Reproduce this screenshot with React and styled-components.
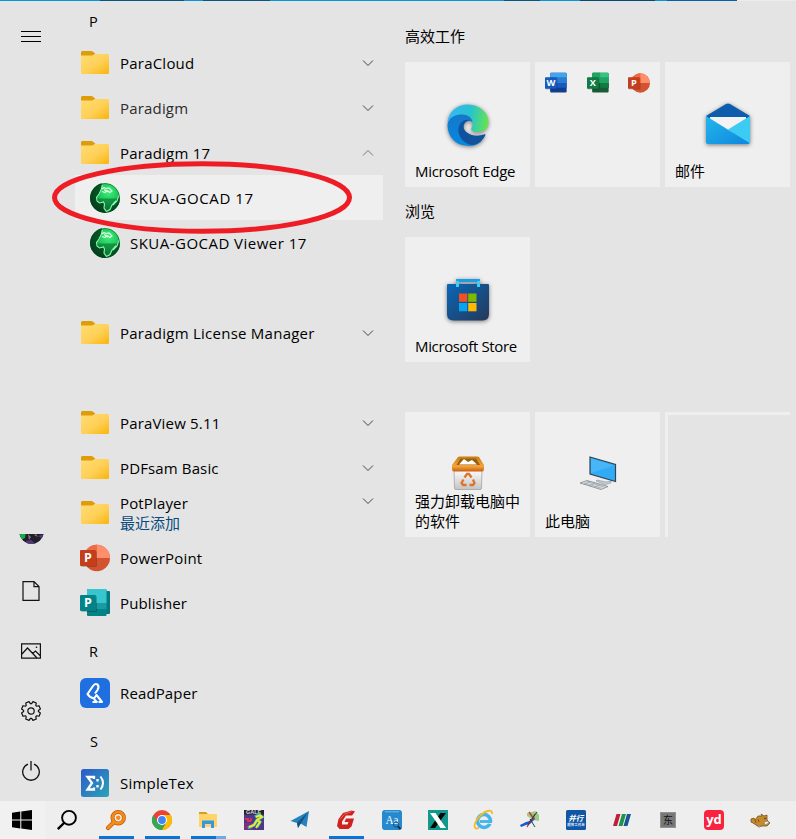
import React from 'react';
import styled, { createGlobalStyle, css } from 'styled-components';

const GlobalStyle = createGlobalStyle`
  * { box-sizing: border-box; }
  body { margin: 0; overflow: hidden; }
  svg { display: block; flex: none; overflow: visible; }
`;

const Screen = styled.div`
  position: relative;
  display: flex;
  flex-direction: column;
  width: 796px;
  height: 839px;
  overflow: hidden;
  background: #e4e4e4;
  color: #000;
  font: 15px/20px 'Open Sans', 'Noto Sans', 'Noto Sans CJK SC', sans-serif;
`;

const TopEdge = styled.div`
  flex: none;
  height: 1px;
  background: linear-gradient(90deg,
    #0896da 0 100px, #075580 100px 184px, #0896da 184px 203px, #075580 203px 270px,
    #0896da 270px 504px, #075580 504px 540px, #0896da 540px 580px, #064a72 580px 655px,
    #0896da 655px 667px, #0561a6 667px 737px, #ececec 737px);
`;

const Menu = styled.div`
  display: flex;
  height: 800px;
  overflow: hidden;
`;

const Rail = styled.nav`
  display: flex;
  flex-direction: column;
  align-items: center;
  width: 62px;
  margin-right: 13px;
`;

const RailSlot = styled.div`
  display: grid;
  place-items: center;
  width: 62px;
  height: ${p => p.$h || 60}px;
  flex: none;
`;

const RailSpacer = styled.div`flex: 1;`;

const Avatar = styled.div`
  flex: none;
  width: 25px;
  height: 10px;
  margin: 0 0 17px 1px;
  overflow: hidden;
`;

const AppList = styled.div`
  display: flex;
  flex-direction: column;
  width: 308px;
  margin-right: 22px;
`;

const Letter = styled.div`
  flex: none;
  height: ${p => p.$h || 45}px;
  padding: ${p => (p.$h ? 11 : 17)}px 0 0 ${p => p.$indent || 14}px;
  font-size: 14.5px;
`;

const AppRow = styled.div`
  display: flex;
  flex: none;
  align-items: center;
  height: 45px;
  padding: 0 9px 0 ${p => (p.$nested ? 14 : 4)}px;
  ${p => p.$hover && css`background: #efefef;`}
`;

const IconSlot = styled.div`
  display: grid;
  place-items: center;
  width: 32px;
  height: 32px;
`;

const AppName = styled.div`
  flex: 1;
  margin-left: 9px;
  padding-top: 1px;
  white-space: nowrap;
  letter-spacing: ${p => p.$ls || 0.13}px;
  color: ${p => (p.$dim ? '#2c2c2c' : 'inherit')};
`;

const Recent = styled.div`
  color: #064a80;
  letter-spacing: 0;
`;

const ChevronSlot = styled.div`
  padding-bottom: ${p => (p.$raised ? 24 : 0)}px;
`;

const Tiles = styled.div`
  display: flex;
  flex-direction: column;
  width: 385px;
`;

const GroupTitle = styled.div`
  height: ${p => p.$h}px;
  padding-top: ${p => p.$top}px;
`;

const TileRow = styled.div`
  display: flex;
  gap: 5px;
  height: 125px;
`;

const Tile = styled.div`
  display: flex;
  flex-direction: column;
  align-items: center;
  width: 125px;
  height: 125px;
  padding: ${p => p.$top || 0}px 0 6px;
  background: #efefef;
`;

const FolderTile = styled(Tile)`
  flex-direction: row;
  align-items: flex-start;
  justify-content: space-between;
  padding: 10px 10px 0 10px;
`;

const GhostTile = styled(Tile)`
  background: transparent;
  border: solid #efefef;
  border-width: 3px 0 0 3px;
`;

const TileLabel = styled.div`
  width: 100%;
  margin-top: auto;
  padding-left: 10px;
  white-space: pre;
  letter-spacing: ${p => p.$ls || 0}px;
`;

const Taskbar = styled.footer`
  display: flex;
  height: 38px;
  background: #eeeeee;
`;

const StartButton = styled.div`
  display: grid;
  place-items: center;
  width: 45px;
  padding-right: 1px;
  background: #f1f1f1;
`;

const SearchButton = styled.div`
  display: grid;
  place-items: center;
  width: 48px;
  padding-right: 4px;
`;

const TaskButton = styled.div`
  display: flex;
  flex-direction: column;
  justify-content: space-between;
  align-items: center;
  width: 46px;
  padding-top: 9px;
`;

const Running = styled.div`
  width: 35px;
  height: 3px;
  background: ${p => (p.$many ? 'linear-gradient(90deg,#0078d7 25px,#66aee8 25px)' : '#0078d7')};
`;

const Marker = styled.svg`
  position: absolute;
  left: 50px;
  top: 159px;
  pointer-events: none;
`;

const Folder = () => (
  <svg width="28" height="24" viewBox="0 0 28 24">
    <defs>
      <linearGradient id="fld" x1="0" y1="0" x2="1" y2="1">
        <stop offset="0" stopColor="#ffdc73" /><stop offset=".55" stopColor="#ffd057" /><stop offset="1" stopColor="#f8b409" />
      </linearGradient>
    </defs>
    <path d="M0 6V1.500Q0 0 1.300 0H10.500Q12 0 14 2.500L15 3.500V5.500H0Z" fill="#dd9c08" />
    <path d="M0 4.500H10.500Q12 4.500 13.500 3H26.600Q28 3 28 4.500V21.500Q28 23 26.600 23H1.400Q0 23 0 21.500Z" fill="url(#fld)" />
  </svg>
);

const Globe = () => (
  <svg width="30" height="30" viewBox="0 0 30 30">
    <defs>
      <radialGradient id="glb" cx=".62" cy=".3" r=".75">
        <stop offset="0" stopColor="#3df07c" /><stop offset=".45" stopColor="#1fc559" /><stop offset=".8" stopColor="#0a7a34" /><stop offset="1" stopColor="#033a1a" />
      </radialGradient>
      <clipPath id="glbc"><circle cx="15" cy="15" r="15" /></clipPath>
    </defs>
    <g clipPath="url(#glbc)">
      <circle cx="15" cy="15" r="15" fill="url(#glb)" />
      <path d="M12 0 11 6 9.500 11 7 14 7 18 9 20 14 19 14 25 16 30H0V0Z" fill="#023a1b" opacity=".82" />
      <path d="M7 15.500H30V22L22 30H15L13.500 24 14 19 9 20 7 18Z" fill="#067030" opacity=".6" />
      <path d="M29 11 26 19 21 25 18 29 27 27 30 20Z" fill="#02431e" opacity=".7" />
      <path d="M12.500 2 11 7 9 11 6.500 14.500 7 18 9.500 20 13.500 19 14.500 21 14 25 16.500 28.500 20 26.500 22 22 26 17.500M29 12 27 18 23 22" fill="none" stroke="#8df5a9" strokeWidth="1.100" />
      <path d="M12 6 14 4.500 16 5.500 19 4.800 22 8 20 9.500 17 7.500 15 9.500 12 8.500M14 6.500 18 9" fill="none" stroke="#dcffe2" strokeWidth="1.200" />
    </g>
    <circle cx="15" cy="15" r="14.500" fill="none" stroke="#03471f" opacity=".45" />
  </svg>
);

const Badge = ({ letter, color }) => (
  <g>
    <rect x="1" y="7" width="16" height="16" rx="1.200" fill="#000" opacity=".22" />
    <rect x="0" y="6" width="16" height="16" rx="1" fill={color} />
    <text x="8" y="18.300" textAnchor="middle" fill="#fff" fontFamily="Open Sans, sans-serif" fontWeight="700" fontSize="12.500">{letter}</text>
  </g>
);

const PowerPoint = ({ size = 30 }) => (
  <svg width={size} height={size} viewBox="0 -1 30 30">
    <circle cx="16.800" cy="14" r="13.200" fill="#d35230" />
    <path d="M16.800 .8A13.200 13.200 0 0 0 3.600 14H16.800Z" fill="#ed6c47" />
    <path d="M16.800 .8A13.200 13.200 0 0 1 30 14H16.800Z" fill="#ff8f6b" />
    <Badge letter="P" color="#c43e1c" />
  </svg>
);

const Publisher = () => (
  <svg width="30" height="30" viewBox="0 -1 30 30">
    <path d="M25 2H29Q30 2 30 3V24Q30 25 29 25H25Z" fill="#027b80" />
    <rect x="7" y="0" width="19.500" height="27" rx="1" fill="#038387" />
    <path d="M7 1Q7 0 8 0H25.500Q26.500 0 26.500 1V14H7Z" fill="#37c6d0" />
    <path d="M16 14H26.500V20H16Z" fill="#1a9ba1" />
    <Badge letter="P" color="#038387" />
  </svg>
);

const OfficeBook = ({ letter, colors, badge }) => (
  <svg width="22" height="22" viewBox="0 -1 30 30">
    <rect x="7" y="0" width="22.500" height="27" rx="1.500" fill={colors[3]} />
    <path d="M7 1.500Q7 0 8.500 0H28Q29.500 0 29.500 1.500V7H7Z" fill={colors[0]} />
    <rect x="7" y="7" width="22.500" height="7" fill={colors[1]} />
    <rect x="7" y="14" width="22.500" height="6.500" fill={colors[2]} />
    {letter === 'X' && <path d="M7 1.500Q7 0 8.500 0H18V14H7Z" fill="#21a366" />}
    {letter === 'X' && <rect x="18" y="14" width="11.500" height="6.500" fill="#107c41" />}
    <Badge letter={letter} color={badge} />
  </svg>
);

const ReadPaper = () => (
  <svg width="30" height="30" viewBox="0 0 30 30">
    <rect width="30" height="30" rx="6" fill="#1f6fe1" />
    <path d="M15 15.500 17.500 12Q19.500 8.500 17.500 6.500Q15 5 13 8L7.500 16Q9.500 19.500 14 20.500L16.500 17L22 24H18.500M17 24H12.500" fill="none" stroke="#fff" strokeWidth="2.100" strokeLinejoin="round" />
    <path d="M14 21 17.500 24.500" stroke="#fff" strokeWidth="1.800" />
  </svg>
);

const SimpleTex = () => (
  <svg width="28" height="28" viewBox="0 0 28 28">
    <defs><linearGradient id="stx" x1="0" y1="0" x2="1" y2="1"><stop stopColor="#2c5acb" /><stop offset="1" stopColor="#2ba4b7" /></linearGradient></defs>
    <rect width="28" height="28" rx="2.500" fill="url(#stx)" />
    <path d="M13 10V8H6.500L11 14 6.500 20.500H13V18.500M16.500 10V12.500M16.500 16V18.500" fill="none" stroke="#fff" strokeWidth="2.300" />
    <path d="M19.500 7.500Q24.500 14 19.500 20.500" fill="none" stroke="#fff" strokeWidth="2" />
  </svg>
);

const Chevron = ({ up }) => (
  <svg width="12" height="6" viewBox="0 0 12 6">
    <path d={up ? 'M1 5.500 6 .5 11 5.500' : 'M1 .5 6 5.500 11 .5'} fill="none" stroke={up ? '#777' : '#444'} strokeWidth="1" />
  </svg>
);

const Shadow = styled.div`
  filter: drop-shadow(0 1px 2px rgba(0, 0, 0, 0.5));
`;

const EdgeIcon = () => (
  <svg width="42" height="42" viewBox="0 0 42 42">
    <defs>
      <linearGradient id="eg1" x1="0" y1=".4" x2="1" y2=".5"><stop stopColor="#36b8f3" /><stop offset=".55" stopColor="#27c3cf" /><stop offset="1" stopColor="#65e44d" /></linearGradient>
      <linearGradient id="eg2" x1=".5" y1="0" x2=".4" y2="1"><stop stopColor="#1478cc" /><stop offset="1" stopColor="#0787df" /></linearGradient>
    </defs>
    <path d="M.5 18C2 7 10 .5 21 .5C33 .5 41.500 9 41.500 18C41.500 25 36 28 31 28C26 28 23.500 26.500 24.500 24.500C28 18 24 11 16 10.500C9 10.500 3 14 .5 18Z" fill="url(#eg1)" />
    <path d="M.5 21C1 14 8 10.500 14 10.500C21 10.500 25 14 25.500 18C19 14 15 21 17 27C19 34 28 39 35 36.500C30 42 23 42.500 19 41.500C8 41 .5 32 .5 21Z" fill="url(#eg2)" />
    <path d="M24 16.500C16 13 10.500 21 11.500 28C13 36 20 41 26 41C32 40 36 36 38.500 31C38.500 30 38 30 37 30.500C27 34 16 29 16.500 22C17 18.500 20 16 24 16.500Z" fill="#11529d" />
  </svg>
);

const MailIcon = () => (
  <svg width="44" height="42" viewBox="0 0 44 42">
    <defs><linearGradient id="ml" x1="0" y1="0" x2="1" y2="1"><stop stopColor="#25b6ed" /><stop offset="1" stopColor="#0e87dd" /></linearGradient></defs>
    <path d="M0 13 20 1Q22 0 24 1L44 13 40 18H4Z" fill="#0e5cac" />
    <path d="M4 14H40V25L22 36 4 25Z" fill="#f3f3f3" />
    <path d="M22 26.500 44 13V39Q44 41 42 41Z" fill="#3bcbf3" />
    <path d="M0 13 43.500 40Q43 41 42 41H2Q0 41 0 39Z" fill="url(#ml)" />
  </svg>
);

const StoreIcon = () => (
  <svg width="42" height="42" viewBox="0 0 42 42">
    <defs><linearGradient id="sto" x1="0" y1="0" x2="1" y2="1"><stop stopColor="#0867b9" /><stop offset="1" stopColor="#263858" /></linearGradient></defs>
    <path d="M0 6Q0 5 1 5H41Q42 5 42 6V35Q42 41.500 35.500 41.500H6.500Q0 41.500 0 35Z" fill="url(#sto)" />
    <path d="M10.500 8V1.500H31.500V8" fill="none" stroke="#199de5" strokeWidth="2.800" />
    <path d="M10.500 2V8M31.500 2V8" stroke="#45cff5" strokeWidth="2.800" />
    <rect x="12" y="14.500" width="8.300" height="8.300" fill="#f25022" /><rect x="21.200" y="14.500" width="8.300" height="8.300" fill="#7fba00" />
    <rect x="12" y="24" width="8.300" height="8.300" fill="#05a4ef" /><rect x="21.200" y="24" width="8.300" height="8.300" fill="#ffb901" />
  </svg>
);

const BinIcon = () => (
  <svg width="34" height="34" viewBox="0 0 34 34">
    <defs>
      <linearGradient id="bin" x1="0" y1="0" x2="0" y2="1"><stop stopColor="#fff" /><stop offset="1" stopColor="#c4c4c4" /></linearGradient>
      <linearGradient id="rim" x1="0" y1="0" x2="0" y2="1"><stop stopColor="#cd7c13" /><stop offset=".65" stopColor="#f3a53a" /><stop offset="1" stopColor="#c95d12" /></linearGradient>
    </defs>
    <path d="M3 13H31L30.500 32Q30.500 33.500 29 33.500H5Q3.500 33.500 3.500 32Z" fill="url(#bin)" stroke="#999" strokeWidth=".7" />
    <path d="M7 1Q7.500 .5 9 .5H26Q27.500 .5 28 1L33 9V13Q33 15.500 31 15.500H3Q1 15.500 1 13V9Z" fill="url(#rim)" />
    <path d="M9.500 2.500H25L29 9H5.500Z" fill="#96600f" />
    <path d="M8 8.500 13 3 17 6 21 4 26 8.500Z" fill="#fff" />
    <path d="M13.500 21.500 16 18H18L20.500 21.500M22 23.500 23.500 27 22 29H18.500M15.500 29H12L10.500 27 12.500 23.500" fill="none" stroke="#dc7429" strokeWidth="2.300" />
  </svg>
);

const ComputerIcon = () => (
  <svg width="38" height="36" viewBox="0 0 38 36">
    <path d="M18 24 27 26 32 25V27L26 28.500 17 25Z" fill="#c6cdd2" stroke="#89939a" strokeWidth=".6" />
    <path d="M11 1 36.500 8.500V25.500L11 18Z" fill="#32abf5" stroke="#314354" strokeWidth="1.200" />
    <path d="M12 2.500 35 9.500 12 17Z" fill="#58c0fb" opacity=".55" />
    <path d="M1 27 8 24.500 29 30.500 22 33.500Z" fill="#d8dde0" stroke="#7d868c" strokeWidth=".8" />
    <path d="M5 27 22 32M8 25.500 25 31M5 28.500 11 25.500M10 30 16 27M15 31.500 21 28.500" stroke="#8e989f" strokeWidth=".6" />
  </svg>
);

const Hamburger = () => (
  <svg width="20" height="11"><path d="M0 .5H20M0 5.500H20M0 10.500H20" stroke="#000" /></svg>
);
const DocIcon = () => (
  <svg width="18" height="20" viewBox="0 0 18 20"><path d="M1 .6H12L17 5.600V19.400H1ZM12 .6V5.600H17" fill="none" stroke="#111" strokeWidth="1.200" /></svg>
);
const PhotoIcon = () => (
  <svg width="20" height="16" viewBox="0 0 20 16"><path d="M.6 .8H19.400V15.200H.6ZM1 11 6.500 5 16 15M11.500 10.500 14.500 8 19 12.500" fill="none" stroke="#111" strokeWidth="1.200" /><circle cx="15.500" cy="4.200" r=".8" /></svg>
);
const gear = (() => {
  let d = '';
  for (let i = 0; i < 8; i++) {
    [[-0.31, 7.4], [-0.19, 9.6], [0.19, 9.6], [0.31, 7.4]].forEach(([a, r], j) => {
      const t = (i * Math.PI) / 4 + Math.PI / 8 + a;
      d += `${i || j ? 'L' : 'M'}${(10 + r * Math.cos(t)).toFixed(2)} ${(10 + r * Math.sin(t)).toFixed(2)}`;
    });
  }
  return d + 'Z';
})();
const GearIcon = () => (
  <svg width="20" height="20" viewBox="0 0 20 20"><path d={gear} fill="none" stroke="#111" strokeWidth="1.200" strokeLinejoin="round" /><circle cx="10" cy="10" r="3.200" fill="none" stroke="#111" strokeWidth="1.200" /></svg>
);
const PowerIcon = () => (
  <svg width="18" height="20" viewBox="0 0 18 20"><path d="M6 3.200A8.300 8.300 0 1 0 12 3.200M9 0V9.500" fill="none" stroke="#111" strokeWidth="1.300" /></svg>
);
const AvatarArt = () => (
  <svg width="25" height="10" viewBox="0 15 25 10">
    <defs><clipPath id="av"><circle cx="12.500" cy="12.500" r="12.300" /></clipPath></defs>
    <g clipPath="url(#av)">
      <rect width="25" height="25" fill="#211f2b" /><path d="M0 12H7L6 19 2 21Z" fill="#16a94a" />
      <path d="M9 15 12 18 10 21ZM15 16 17 15 19 18Z" fill="#917476" /><path d="M7 22 12 21 17 25H7ZM19 17 25 15V21Z" fill="#573679" />
    </g>
  </svg>
);

const Start = () => (
  <svg width="20" height="20" viewBox="0 0 20 20"><path d="M0 2.800 8.300 1.600V9.400H0ZM9.300 1.400 20 0V9.400H9.300ZM0 10.400H8.300V18.400L0 17.200ZM9.300 10.400H20V20L9.300 18.600Z" /></svg>
);
const Search = () => (
  <svg width="20" height="20" viewBox="0 0 20 20"><circle cx="12" cy="7.800" r="6.900" fill="none" stroke="#000" strokeWidth="1.900" /><path d="M7.500 12.500 .8 19.200" stroke="#000" strokeWidth="2.400" /></svg>
);

const Task = ({ children }) => <svg width="20" height="20" viewBox="0 0 20 20">{children}</svg>;

const tasks = [
  { run: 1, art: <><path d="M8 12 2 18" stroke="#b45b11" strokeWidth="4.200" strokeLinecap="round" /><circle cx="12.200" cy="7.700" r="5.700" fill="none" stroke="#b45b11" strokeWidth="4" /><circle cx="12.200" cy="7.700" r="5.700" fill="none" stroke="#f98a14" strokeWidth="2.600" /><path d="M8 12 2 18" stroke="#f98a14" strokeWidth="2.800" strokeLinecap="round" /><circle cx="12.200" cy="7.700" r="2.200" fill="#f98a14" /></> },
  { run: 1, art: <><circle cx="10" cy="10" r="10" fill="#ea4335" /><path d="M1.300 5A10 10 0 0 0 10 20L14.300 12.500 5.700 12.500Z" fill="#34a853" /><path d="M10 20A10 10 0 0 0 18.700 5H10L14.300 12.500Z" fill="#fbbc05" /><circle cx="10" cy="10" r="5" fill="#fff" /><circle cx="10" cy="10" r="3.900" fill="#4285f4" /></> },
  { run: 2, art: <><path d="M1 2H8L10 4V8H1Z" fill="#d99b20" /><path d="M1 4H19V17H1Z" fill="#ffd469" /><path d="M4 18V10.500H16V18H13V14H7V18Z" fill="#3797dd" /></> },
  { art: <><rect width="20" height="20" fill="#4e3688" /><path d="M0 0H20V4.500H0Z" fill="#242329" /><path d="M0 13H9V20H0Z" fill="#7b317d" /><text x="2" y="4" fontSize="5.500" fontWeight="700" fill="#ddd" fontFamily="Liberation Sans">GALE</text><path d="M1 9H5M3 11H7M7 8V11" stroke="#dc315d" strokeWidth="1.800" /><path d="M11 7 15 4.500 18 7 13 10 10 15 4 18M13 10 16 12 13 17" fill="none" stroke="#20bfd9" strokeWidth="3" /><path d="M12 7 16 5.500 18 7 13 10 10 15 5 17M13 10 16 12 12 18" fill="none" stroke="#f1e927" strokeWidth="2" /></> },
  { art: <><path d="M.5 11 19 1 16.500 17 10.500 13.500 8 18 7 13Z" fill="#2582bd" /><path d="M7 13 18 2 8 18Z" fill="#15527f" /></> },
  { run: 1, art: <><path d="M15.500 .5 19 1.500 16 5.500H10L6 11.500V14.500H11.500L12.500 12H8.500L10 8.500H18L15.500 16.500 12.500 19H3.500L1 16 2.500 9 7 3Z" fill="#cf211d" /><path d="M15.500 1.500 8.500 4 4 9.500" fill="none" stroke="#f06050" strokeWidth="1" /></> },
  { art: <><rect width="20" height="20" rx="3" fill="#2689ce" /><path d="M3 1.800H17" stroke="#8ec7ea" strokeWidth=".8" /><text x="3.500" y="14" fontSize="12" fill="#fff" fontFamily="Liberation Serif" textLength="13" lengthAdjust="spacingAndGlyphs">Aa</text><circle cx="14" cy="14.500" r="2.600" fill="none" stroke="#174f7a" strokeWidth="1" /><path d="M16 16.500 18.500 19" stroke="#172b3a" strokeWidth="1.800" /></> },
  { art: <><rect width="20" height="20" fill="#12998b" /><path d="M12.500 3H18L7 18H2Z" fill="#050505" /><path d="M2 3H7.500L18 18H12.500Z" fill="#fff" /></> },
  { art: <><circle cx="10" cy="11" r="6.500" fill="none" stroke="#45b4ec" strokeWidth="3.600" /><path d="M6 11.500H18" stroke="#45b4ec" strokeWidth="2.800" /><path d="M12 13H20V16L17 14Z" fill="#eee" /><path d="M18 4C19-1 12 0 7 5C1 10-1 17 2 18.500C3 19 4 18 5 17.500" fill="none" stroke="#f3bb24" strokeWidth="1.800" /></> },
  { art: <><path d="M7 3 16 1 19 5 19 11 13 10 7 6Z" fill="#9ccd7c" /><path d="M0 15 6 12 10 11 14 7 15 9 10 14 6 15 1 17Z" fill="#1557cf" /><path d="M9 2 14 9M15 4 7 17" stroke="#b93440" strokeWidth="1.300" /><path d="M10 9 15 17M17 2 12 9M11 9 8 15" stroke="#1e3f57" strokeWidth="1" /></> },
  { art: <><rect width="20" height="20" rx="1.500" fill="#1155a4" /><text x="9.800" y="10.800" textAnchor="middle" fontSize="7.500" fontWeight="700" fontStyle="italic" fill="#fff" fontFamily="Noto Sans CJK SC">并行</text><text x="10" y="16" textAnchor="middle" fontSize="3.500" fontWeight="700" fill="#d8e6f5" fontFamily="Noto Sans CJK SC">超算工作台</text></> },
  { art: <><path d="M4.500 4H8.500L5 16H1Z" fill="#bf2036" /><path d="M10 4H14L10.500 16H6.500Z" fill="#23914d" /><path d="M15 4H19L15.500 16H11.500Z" fill="#155795" /></> },
  { art: <><rect x="2.500" y="2.500" width="15" height="15" fill="#777" stroke="#939393" /><text x="10" y="13.800" textAnchor="middle" fontSize="10" fill="#111" fontFamily="Noto Sans CJK SC">东</text></> },
  { art: <><rect width="20" height="20" rx="4" fill="#f92340" /><text x="10" y="14" textAnchor="middle" fontSize="13" fontWeight="700" fill="#fff" fontFamily="Open Sans">yd</text></> },
  { art: <><path d="M1 9 4 8 5 10 8 6 12 6 11 4 14 6 17 5 17 10 20 13 17 16H12L9 17 6 15 3 13 1 12Z" fill="#c78a28" stroke="#76521f" strokeWidth=".8" /><path d="M14 12 18 11 19 13 15 15ZM8 15 11 16 9 17Z" fill="#f3eee1" stroke="#77736a" strokeWidth=".6" /><path d="M5 10 6 13M8 9 9 12" stroke="#7b501b" /><circle cx="15" cy="8.500" r=".8" fill="#333" /></> },
];

const AppEntry = ({ icon = <Folder />, name, chevron, nested, hover, dim, recent, ls }) => (
  <AppRow $nested={nested} $hover={hover}>
    <IconSlot>{icon}</IconSlot>
    <AppName $dim={dim} $ls={ls}>
      {name}
      {recent && <Recent>最近添加</Recent>}
    </AppName>
    {chevron && <ChevronSlot $raised={recent}><Chevron up={chevron === 'up'} /></ChevronSlot>}
  </AppRow>
);

export default function App() {
  return (
    <Screen>
      <GlobalStyle />
      <TopEdge />
      <Menu>
        <Rail>
          <RailSlot $h={71}><Hamburger /></RailSlot>
          <RailSpacer />
          <Avatar><AvatarArt /></Avatar>
          <RailSlot><DocIcon /></RailSlot>
          <RailSlot><PhotoIcon /></RailSlot>
          <RailSlot><GearIcon /></RailSlot>
          <RailSlot><PowerIcon /></RailSlot>
        </Rail>
        <AppList>
          <Letter $h={39}>P</Letter>
          <AppEntry name="ParaCloud" chevron="down" ls={0.22} />
          <AppEntry name="Paradigm" chevron="down" dim ls={0.18} />
          <AppEntry name="Paradigm 17" chevron="up" ls={0.22} />
          <AppEntry icon={<Globe />} name="SKUA-GOCAD 17" nested hover ls={0.58} />
          <AppEntry icon={<Globe />} name="SKUA-GOCAD Viewer 17" nested ls={0.47} />
          <AppRow />
          <AppEntry name="Paradigm License Manager" chevron="down" ls={0.25} />
          <AppRow />
          <AppEntry name="ParaView 5.11" chevron="down" ls={0.17} />
          <AppEntry name="PDFsam Basic" chevron="down" />
          <AppEntry name="PotPlayer" chevron="down" recent ls={0.15} />
          <AppEntry icon={<PowerPoint />} name="PowerPoint" ls={0.17} />
          <AppEntry icon={<Publisher />} name="Publisher" />
          <Letter>R</Letter>
          <AppEntry icon={<ReadPaper />} name="ReadPaper" />
          <Letter $indent={15}>S</Letter>
          <AppEntry icon={<SimpleTex />} name="SimpleTex" ls={0.22} />
        </AppList>
        <Tiles>
          <GroupTitle $h={61} $top={25}>高效工作</GroupTitle>
          <TileRow>
            <Tile $top={42}><Shadow><EdgeIcon /></Shadow><TileLabel $ls={-0.28}>Microsoft Edge</TileLabel></Tile>
            <FolderTile>
              <OfficeBook letter="W" badge="#185abd" colors={['#41a5ee', '#2b7cd3', '#185abd', '#103f91']} />
              <OfficeBook letter="X" badge="#107c41" colors={['#33c481', '#21a366', '#185c37', '#185c37']} />
              <PowerPoint size={22} />
            </FolderTile>
            <Tile $top={41}><Shadow><MailIcon /></Shadow><TileLabel>邮件</TileLabel></Tile>
          </TileRow>
          <GroupTitle $h={50} $top={14}>浏览</GroupTitle>
          <TileRow>
            <Tile $top={42}><Shadow><StoreIcon /></Shadow><TileLabel $ls={-0.36}>Microsoft Store</TileLabel></Tile>
          </TileRow>
          <GroupTitle $h={50} $top={0} />
          <TileRow>
            <Tile $top={44}><BinIcon /><TileLabel>{'强力卸载电脑中\n的软件'}</TileLabel></Tile>
            <Tile $top={44}><ComputerIcon /><TileLabel>此电脑</TileLabel></Tile>
            <GhostTile />
          </TileRow>
        </Tiles>
      </Menu>
      <Taskbar>
        <StartButton><Start /></StartButton>
        <SearchButton><Search /></SearchButton>
        {tasks.map((t, i) => (
          <TaskButton key={i}>
            <Task>{t.art}</Task>
            {t.run && <Running $many={t.run === 2} />}
          </TaskButton>
        ))}
      </Taskbar>
      <Marker width="304" height="78" viewBox="0 0 304 78">
        <ellipse cx="152" cy="38.500" rx="147.500" ry="33.800" fill="none" stroke="#ee1c25" strokeWidth="5" />
      </Marker>
    </Screen>
  );
}
